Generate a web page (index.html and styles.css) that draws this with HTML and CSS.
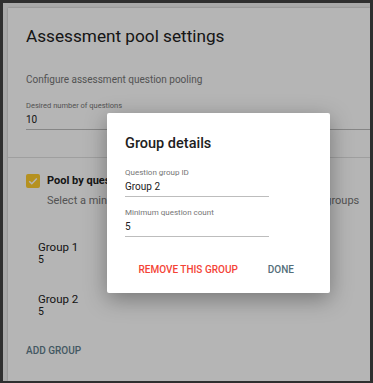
FILE: index.html
```html
<!DOCTYPE html>
<html lang="en">
<head>
  <meta charset="UTF-8">
  <title>Assessment pool settings</title>
  <meta name="viewport" content="width=device-width, initial-scale=1.0">
  <link rel="stylesheet" href="styles.css">
</head>
<body>
  <div class="frame">
    <div class="page">
      <div class="card">
        <!-- pool settings -->
        <section class="card-head">
          <h1 class="title">Assessment pool settings</h1>
          <p class="hint">Configure assessment question pooling</p>
          <div class="field field-wide">
            <label class="field-label">Desired number of questions</label>
            <div class="field-value">10</div>
          </div>
        </section>

        <!-- groups -->
        <section class="card-body">
          <div class="check-row">
            <span class="checkbox">
              <svg width="14" height="14" viewBox="0 0 14 14"><path d="M3.2 7.2 L5.8 9.8 L10.8 4.6" fill="none" stroke="#fff" stroke-width="1.5"/></svg>
            </span>
            <div>
              <div class="check-label">Pool by question groups</div>
              <div class="check-hint">Select a minimum number of questions from each of the groups</div>
            </div>
          </div>
          <ul class="groups">
            <li class="group">
              <div class="group-name">Group 1</div>
              <div class="group-count">5</div>
            </li>
            <li class="group">
              <div class="group-name">Group 2</div>
              <div class="group-count">5</div>
            </li>
          </ul>
          <button class="btn btn-add">ADD GROUP</button>
        </section>
      </div>
    </div>

    <div class="scrim"></div>

    <div class="dialog">
      <h2 class="dialog-title">Group details</h2>
      <div class="field">
        <label class="field-label">Question group ID</label>
        <div class="field-value">Group 2</div>
      </div>
      <div class="field">
        <label class="field-label">Minimum question count</label>
        <div class="field-value">5</div>
      </div>
      <div class="dialog-actions">
        <button class="btn btn-remove">REMOVE THIS GROUP</button>
        <button class="btn btn-done">DONE</button>
      </div>
    </div>
  </div>
</body>
</html>
```

FILE: styles.css
```css
/* reset */
html, body {
  margin: 0;
  padding: 0;
  background-color: #2f2f2f;
  font-family: Roboto, "Liberation Sans", sans-serif;
  color: #212121;
  box-sizing: border-box;
}
*, *::before, *::after {
  box-sizing: inherit;
}
/* outer window */
.frame {
  position: relative;
  width: 373px;
  height: 383px;
  border: 3px solid #2f2f2f;
  border-bottom-width: 2px;
  overflow: hidden;
}
.page {
  height: 100%;
  padding: 5px 0 0 5px;
  background-color: #eeeeee;
}
/* settings card */
.card {
  height: 100%;
  background-color: #ffffff;
  box-shadow: 0 0 2px rgba(0, 0, 0, 0.25);
}
.card-head {
  padding: 17px 0 27px 18px;
  border-bottom: 1px solid #e0e0e0;
}
.title {
  margin: 0;
  font-size: 17.2px;
  line-height: 22px;
  font-weight: 400;
}
.hint {
  margin: 26px 0 0;
  font-size: 10px;
  line-height: 14px;
  color: #757575;
}
.field-wide {
  margin-top: 14px;
}
.field-label {
  display: block;
  font-size: 7.5px;
  line-height: 10px;
  color: #757575;
}
.field-value {
  margin-top: 2px;
  padding-bottom: 2px;
  font-size: 10px;
  line-height: 14px;
  border-bottom: 1px solid #bdbdbd;
}
.card-body {
  padding: 16px 0 0 18px;
}
.check-row {
  display: flex;
  gap: 7px;
}
.checkbox {
  flex: none;
  width: 14px;
  height: 14px;
  border-radius: 2px;
  background-color: #ffcc2e;
}
.checkbox svg {
  display: block;
}
.check-label {
  font-size: 11px;
  line-height: 14px;
  font-weight: 700;
}
.check-hint {
  margin-top: 6px;
  font-size: 11px;
  line-height: 14px;
  color: #757575;
  white-space: nowrap;
}
.groups {
  list-style: none;
  margin: 32px 0 0;
  padding: 0 0 0 12px;
}
.group + .group {
  margin-top: 26px;
}
.group-name {
  font-size: 11.5px;
  line-height: 14px;
}
.group-count {
  font-size: 10.5px;
  line-height: 12px;
}
/* flat buttons */
.btn {
  border: 0;
  padding: 0;
  background: none;
  font-family: Roboto, "Liberation Sans", sans-serif;
  font-size: 10px;
  line-height: 14px;
  font-weight: 500;
  cursor: pointer;
}
.btn-add {
  display: block;
  margin-top: 26px;
  color: #607d8b;
}
/* dialog over the page */
.scrim {
  position: absolute;
  inset: 0;
  background-color: rgba(0, 0, 0, 0.29);
}
.dialog {
  position: absolute;
  left: 104px;
  top: 110px;
  width: 223px;
  height: 180px;
  padding: 21px 0 0 18px;
  background-color: #ffffff;
  border-radius: 2px;
  box-shadow: 0 6px 22px rgba(0, 0, 0, 0.35);
}
.dialog-title {
  margin: 0 0 14px;
  font-size: 14.5px;
  line-height: 20px;
  font-weight: 500;
}
.dialog .field {
  width: 144px;
}
.dialog .field + .field {
  margin-top: 11px;
}
.dialog .field-label {
  font-size: 8px;
}
.dialog .field-value {
  padding-bottom: 2px;
}
.dialog-actions {
  display: flex;
  justify-content: flex-end;
  gap: 30px;
  margin-top: 26px;
  padding-right: 36px;
}
.btn-remove {
  color: #f44336;
}
.btn-done {
  color: #546e7a;
}
```
